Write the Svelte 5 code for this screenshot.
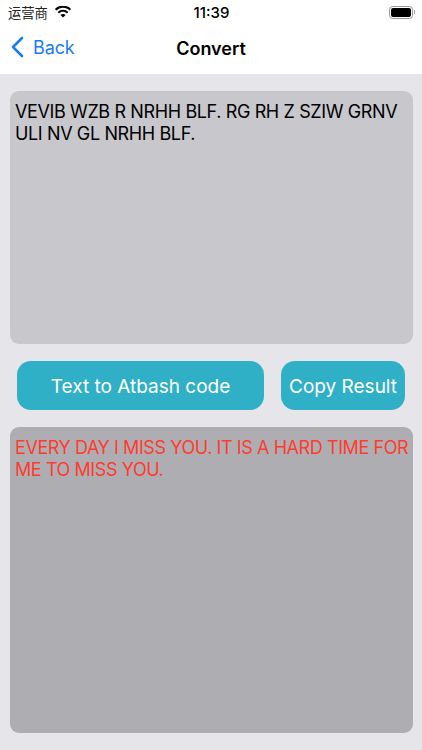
<script>
  const input = 'VEVIB WZB R NRHH BLF. RG RH Z SZIW GRNV ULI NV GL NRHH BLF.'
  const output = 'EVERY DAY I MISS YOU. IT IS A HARD TIME FOR ME TO MISS YOU.'
</script>

<div class="screen">
  <header>
    <div class="status">
      <div class="carrier">
        <span>运营商</span>
        <svg width="18" height="13" viewBox="0 0 18 13">
          <path d="M9 1.800c2.600 0 4.900 1 6.600 2.700l1.500-1.600A11.400 11.400 0 0 0 9 -.4 11.400 11.400 0 0 0 .9 2.900l1.500 1.600A9.300 9.300 0 0 1 9 1.800z" fill="#000"/>
          <path d="M9 5.800c1.500 0 2.900.6 3.900 1.600l1.500-1.500A7.600 7.600 0 0 0 9 3.700a7.600 7.600 0 0 0-5.400 2.200l1.500 1.500C6.100 6.400 7.500 5.800 9 5.800z" fill="#000"/>
          <path d="M9 7.900c-1 0-1.900.4-2.600 1L9 11.600l2.600-2.700C10.900 8.300 10 7.900 9 7.900z" fill="#000"/>
        </svg>
      </div>
      <span class="time">11:39</span>
      <div class="battery">
        <div class="shell"><div class="level"></div></div>
        <div class="cap"></div>
      </div>
    </div>
    <nav>
      <div class="back">
        <svg width="14" height="22" viewBox="0 0 14 22">
          <path d="M12 2 3 11l9 9" fill="none" stroke="#1a7cf0" stroke-width="2.600" stroke-linecap="round" stroke-linejoin="round"/>
        </svg>
        <span>Back</span>
      </div>
      <div class="title">Convert</div>
    </nav>
  </header>

  <main>
    <div class="box source">{input}</div>
    <div class="actions">
      <button class="convert">Text to Atbash code</button>
      <button class="copy">Copy Result</button>
    </div>
    <div class="box result">{output}</div>
  </main>
</div>

<style>
  :global(body) {
    margin: 0;
    background: #e5e5ea;
  }

  .screen {
    height: 750px;
    display: flex;
    flex-direction: column;
    font-family: Inter, "Noto Sans CJK SC", sans-serif;
    color: #000;
    overflow: hidden;
  }

  header {
    background: #fff;
    height: 74px;
    flex: none;
  }

  .status {
    height: 24px;
    display: grid;
    grid-template-columns: 1fr auto 1fr;
    align-items: center;
    padding: 0 7px 0 8px;
    font-size: 15px;
  }

  .carrier {
    display: flex;
    align-items: center;
    gap: 6px;
    color: #222;
    font-size: 13.300px;
  }

  .time {
    font-weight: 500;
  }

  .battery {
    justify-self: end;
    display: flex;
    align-items: center;
    gap: 1px;
  }

  .shell {
    width: 20px;
    height: 9px;
    border: 1px solid #999;
    border-radius: 3.500px;
    padding: 1px;
    box-sizing: content-box;
  }

  .level {
    height: 100%;
    background: #000;
    border-radius: 2px;
  }

  .cap {
    width: 1px;
    height: 4px;
    background: #aaa;
  }

  nav {
    height: 48px;
    position: relative;
    display: flex;
    align-items: center;
    justify-content: center;
  }

  .back {
    position: absolute;
    left: 10px;
    top: 12px;
    display: flex;
    align-items: center;
    gap: 9px;
    color: #1a7cf0;
    font-size: 18px;
    letter-spacing: -0.1px;
  }

  .title {
    font-size: 18px;
    font-weight: 600;
  }

  main {
    flex: 1;
    display: flex;
    flex-direction: column;
    padding: 17px 9px 17px 10px;
    gap: 17px;
  }

  .box {
    border-radius: 9px;
    padding: 10px 5px;
    font-size: 18px;
    line-height: 22px;
    letter-spacing: -0.38px;
    box-sizing: border-box;
  }

  .source {
    height: 253px;
    background: #c7c7cc;
    color: #000;
  }

  .result {
    height: 306px;
    padding-right: 0;
    background: #aeaeb2;
    color: #ff3b30;
    letter-spacing: -0.42px;
  }

  .actions {
    height: 49px;
    display: flex;
    gap: 17px;
    padding: 0 8px 0 7px;
  }

  button {
    border: none;
    border-radius: 14px;
    background: #30b0c7;
    color: #fff;
    font: inherit;
    font-size: 19px;
    padding: 1px 0 0;
  }

  .convert {
    width: 247px;
  }

  .copy {
    width: 124px;
  }
</style>
